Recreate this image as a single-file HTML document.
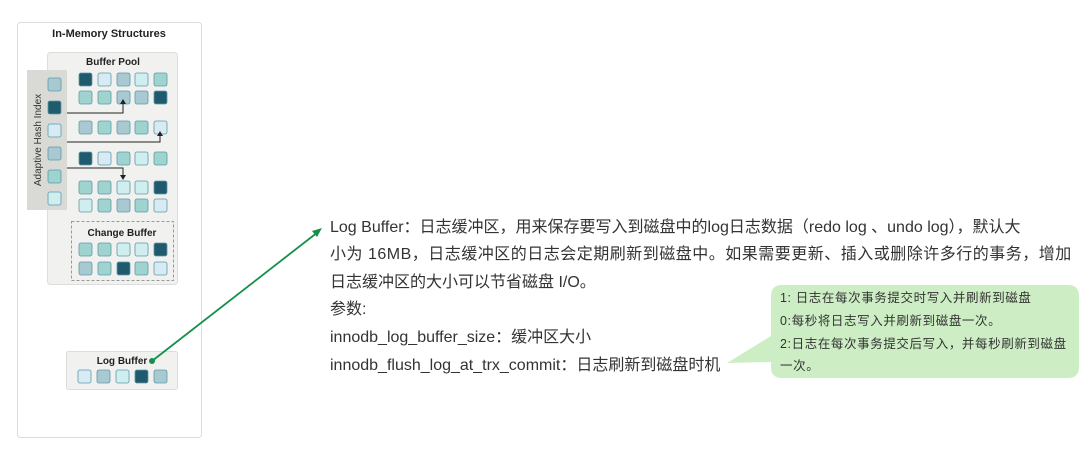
<!DOCTYPE html>
<html><head><meta charset="utf-8"><style>
html,body{margin:0;padding:0;background:#fff;width:1090px;height:457px;overflow:hidden}
.t{position:absolute;left:330px;font-family:"Liberation Sans","Noto Sans CJK SC",sans-serif;font-size:16px;letter-spacing:0;color:#333;white-space:nowrap;line-height:20px}
.b{position:absolute;left:780px;font-family:"Liberation Sans","Noto Sans CJK SC",sans-serif;font-size:12.5px;letter-spacing:0.6px;color:#333;white-space:nowrap;line-height:16px}
</style></head><body>
<svg width="1090" height="457" style="position:absolute;left:0;top:0" font-family="Liberation Sans, sans-serif">
<rect x="17.5" y="22.5" width="184" height="415" rx="3" fill="#fff" stroke="#dcdcdc"/>
<text x="109" y="37" text-anchor="middle" font-size="11" font-weight="bold" fill="#222">In-Memory Structures</text>
<rect x="47.5" y="52.5" width="130" height="232" rx="3" fill="#f1f1f0" stroke="#ddd"/>
<text x="113" y="65" text-anchor="middle" font-size="10" font-weight="bold" fill="#222">Buffer Pool</text>
<rect x="27" y="70" width="40" height="140" fill="#d9d9d6"/>
<text transform="translate(41,140) rotate(-90)" text-anchor="middle" font-size="10" fill="#333">Adaptive Hash Index</text>
<g stroke="#5e9aa6" stroke-width="0.8">
<rect x="48" y="78" width="13" height="13" rx="2" fill="#a9c9d2"/>
<rect x="48" y="101" width="13" height="13" rx="2" fill="#1f5a6e"/>
<rect x="48" y="124" width="13" height="13" rx="2" fill="#d8ebf5"/>
<rect x="48" y="147" width="13" height="13" rx="2" fill="#a9c9d2"/>
<rect x="48" y="170" width="13" height="13" rx="2" fill="#9fd3cf"/>
<rect x="48" y="192" width="13" height="13" rx="2" fill="#cfeef0"/>
</g>
<g stroke="#5e9aa6" stroke-width="0.8">
<rect x="79" y="73" width="13" height="13" rx="2" fill="#1f5a6e"/><rect x="98" y="73" width="13" height="13" rx="2" fill="#d8ebf5"/><rect x="117" y="73" width="13" height="13" rx="2" fill="#a9c9d2"/><rect x="135" y="73" width="13" height="13" rx="2" fill="#cfeef0"/><rect x="154" y="73" width="13" height="13" rx="2" fill="#9fd3cf"/>
<rect x="79" y="91" width="13" height="13" rx="2" fill="#9fd3cf"/><rect x="98" y="91" width="13" height="13" rx="2" fill="#9fd3cf"/><rect x="117" y="91" width="13" height="13" rx="2" fill="#a9c9d2"/><rect x="135" y="91" width="13" height="13" rx="2" fill="#a9c9d2"/><rect x="154" y="91" width="13" height="13" rx="2" fill="#1f5a6e"/>
<rect x="79" y="121" width="13" height="13" rx="2" fill="#a9c9d2"/><rect x="98" y="121" width="13" height="13" rx="2" fill="#9fd3cf"/><rect x="117" y="121" width="13" height="13" rx="2" fill="#a9c9d2"/><rect x="135" y="121" width="13" height="13" rx="2" fill="#9fd3cf"/><rect x="154" y="121" width="13" height="13" rx="2" fill="#d8ebf5"/>
<rect x="79" y="152" width="13" height="13" rx="2" fill="#1f5a6e"/><rect x="98" y="152" width="13" height="13" rx="2" fill="#d8ebf5"/><rect x="117" y="152" width="13" height="13" rx="2" fill="#9fd3cf"/><rect x="135" y="152" width="13" height="13" rx="2" fill="#cfeef0"/><rect x="154" y="152" width="13" height="13" rx="2" fill="#9fd3cf"/>
<rect x="79" y="181" width="13" height="13" rx="2" fill="#9fd3cf"/><rect x="98" y="181" width="13" height="13" rx="2" fill="#9fd3cf"/><rect x="117" y="181" width="13" height="13" rx="2" fill="#cfeef0"/><rect x="135" y="181" width="13" height="13" rx="2" fill="#cfeef0"/><rect x="154" y="181" width="13" height="13" rx="2" fill="#1f5a6e"/>
<rect x="79" y="199" width="13" height="13" rx="2" fill="#cfeef0"/><rect x="98" y="199" width="13" height="13" rx="2" fill="#9fd3cf"/><rect x="117" y="199" width="13" height="13" rx="2" fill="#a9c9d2"/><rect x="135" y="199" width="13" height="13" rx="2" fill="#9fd3cf"/><rect x="154" y="199" width="13" height="13" rx="2" fill="#d8ebf5"/>
</g>
<g stroke="#222" stroke-width="1" fill="none">
<path d="M67 113H123V103"/><path d="M67 142H160V135"/><path d="M67 168H123V176"/>
</g>
<g fill="#222"><path d="M120 104L123 99L126 104Z"/><path d="M157 136L160 131L163 136Z"/><path d="M120 175L123 180L126 175Z"/></g>
<rect x="71.5" y="221.5" width="102" height="59" fill="none" stroke="#999" stroke-dasharray="3,2"/>
<text x="122" y="236" text-anchor="middle" font-size="10" font-weight="bold" fill="#222">Change Buffer</text>
<g stroke="#5e9aa6" stroke-width="0.8">
<rect x="79" y="243" width="13" height="13" rx="2" fill="#9fd3cf"/><rect x="98" y="243" width="13" height="13" rx="2" fill="#9fd3cf"/><rect x="117" y="243" width="13" height="13" rx="2" fill="#cfeef0"/><rect x="135" y="243" width="13" height="13" rx="2" fill="#cfeef0"/><rect x="154" y="243" width="13" height="13" rx="2" fill="#1f5a6e"/>
<rect x="79" y="262" width="13" height="13" rx="2" fill="#a9c9d2"/><rect x="98" y="262" width="13" height="13" rx="2" fill="#9fd3cf"/><rect x="117" y="262" width="13" height="13" rx="2" fill="#1f5a6e"/><rect x="135" y="262" width="13" height="13" rx="2" fill="#9fd3cf"/><rect x="154" y="262" width="13" height="13" rx="2" fill="#d8ebf5"/>
</g>
<rect x="66.5" y="351.5" width="111" height="38" rx="2" fill="#f1f1f0" stroke="#ddd"/>
<text x="122" y="364" text-anchor="middle" font-size="10" font-weight="bold" fill="#222">Log Buffer</text>
<g stroke="#5e9aa6" stroke-width="0.8">
<rect x="78" y="370" width="13" height="13" rx="2" fill="#d8ebf5"/><rect x="97" y="370" width="13" height="13" rx="2" fill="#a9c9d2"/><rect x="116" y="370" width="13" height="13" rx="2" fill="#cfeef0"/><rect x="135" y="370" width="13" height="13" rx="2" fill="#1f5a6e"/><rect x="154" y="370" width="13" height="13" rx="2" fill="#a9c9d2"/>
</g>
<line x1="152" y1="361" x2="318" y2="232" stroke="#14904a" stroke-width="1.8"/>
<path d="M322 228L312 231L317 237Z" fill="#14904a"/>
<circle cx="152" cy="361" r="3" fill="#14904a"/>
<path d="M782 285H1068Q1079 285 1079 296V367Q1079 378 1068 378H782Q771 378 771 367V362L727 363L771 336V296Q771 285 782 285Z" fill="#cdeec4"/>
</svg>
<div class="t" style="top:218px">Log Buffer：日志缓冲区，用来保存要写入到磁盘中的log日志数据（redo log 、undo log），默认大</div>
<div class="t" style="top:245px;letter-spacing:0.5px">小为 16MB，日志缓冲区的日志会定期刷新到磁盘中。如果需要更新、插入或删除许多行的事务，增加</div>
<div class="t" style="top:273px">日志缓冲区的大小可以节省磁盘 I/O。</div>
<div class="t" style="top:300px">参数:</div>
<div class="t" style="top:328px">innodb_log_buffer_size：缓冲区大小</div>
<div class="t" style="top:356px">innodb_flush_log_at_trx_commit：日志刷新到磁盘时机</div>
<div class="b" style="top:290px">1: 日志在每次事务提交时写入并刷新到磁盘</div>
<div class="b" style="top:313px">0:每秒将日志写入并刷新到磁盘一次。</div>
<div class="b" style="top:336px">2:日志在每次事务提交后写入，并每秒刷新到磁盘</div>
<div class="b" style="top:358px">一次。</div>
</body></html>
